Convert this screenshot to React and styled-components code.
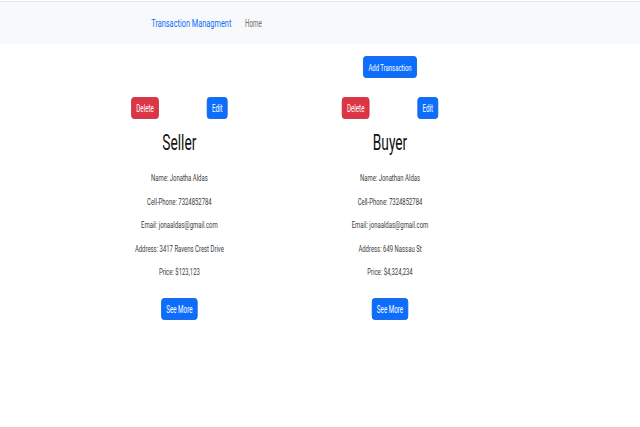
import styled, { createGlobalStyle } from 'styled-components'

// the screenshot is squeezed sideways, so the page is laid out 1024 wide and scaled to 640
const SQUEEZE = 0.625

const GlobalStyle = createGlobalStyle`
  html, body {
    margin: 0;
    padding: 0;
    background: #fff;
    overflow: hidden;
  }
  body {
    font-family: Roboto, "Liberation Sans", Arial, sans-serif;
    color: #212529;
  }
`

const Page = styled.div`
  width: 1024px;
  height: 427px;
  transform: scaleX(${SQUEEZE});
  transform-origin: 0 0;
`

const Navbar = styled.nav`
  margin-top: 1px;
  border-top: 1px solid #e4e4e4;
  height: 42px;
  background: #f8f9fa;
  display: flex;
  align-items: center;
  gap: 22px;
  padding-left: 242px;
`

const Brand = styled.a`
  font-size: 11.8px;
  color: #0d6efd;
  text-decoration: none;
`

const NavLink = styled.a`
  font-size: 10px;
  color: #6c6f73;
  text-decoration: none;
`

const Main = styled.main`
  display: grid;
  grid-template-columns: 154px 154px;
  column-gap: 183px;
  padding-left: 210px;
  padding-top: 12px;
`

const Toolbar = styled.div`
  grid-column: 2;
  display: flex;
  justify-content: center;
  margin-bottom: 19px;
`

const Button = styled.button`
  height: 22px;
  padding: 0 ${p => p.$pad || 8}px;
  display: inline-flex;
  align-items: center;
  justify-content: center;
  font-family: inherit;
  font-size: ${p => p.$size || 9.5}px;
  color: #fff;
  background: ${p => (p.$variant === 'danger' ? '#dc3545' : '#0d6efd')};
  border: 1px solid ${p => (p.$variant === 'danger' ? '#c62a3a' : '#0b5ed7')};
  border-radius: 4px;
  cursor: pointer;
`

const Card = styled.section`
  display: flex;
  flex-direction: column;
  align-items: center;
  grid-row: 2;
`

const Actions = styled.div`
  align-self: stretch;
  display: flex;
  justify-content: space-between;
`

const Title = styled.h1`
  margin: 11px 0 15px;
  font-size: 22px;
  font-weight: 400;
  line-height: 1.2;
  color: #111;
`

const Field = styled.p`
  margin: 0 0 9.5px;
  font-size: 9.5px;
  line-height: 14px;
  white-space: nowrap;
  color: #3a3a3a;
`

const MoreButton = styled(Button)`
  margin-top: 9.5px;
`

const parties = [
  {
    title: 'Seller',
    name: 'Jonatha Aldas',
    phone: '7324852784',
    email: 'jonaaldas@gmail.com',
    address: '3417 Ravens Crest Drive',
    price: '$123,123',
  },
  {
    title: 'Buyer',
    name: 'Jonathan Aldas',
    phone: '7324852784',
    email: 'jonaaldas@gmail.com',
    address: '649 Nassau St',
    price: '$4,324,234',
  },
]

function PartyCard({ party }) {
  return (
    <Card>
      <Actions>
        <Button $variant="danger" $size={10} $pad={7}>Delete</Button>
        <Button $size={10} $pad={7}>Edit</Button>
      </Actions>
      <Title>{party.title}</Title>
      <Field>Name: {party.name}</Field>
      <Field>Cell-Phone: {party.phone}</Field>
      <Field>Email: {party.email}</Field>
      <Field>Address: {party.address}</Field>
      <Field>Price: {party.price}</Field>
      <MoreButton $size={10} $pad={7}>See More</MoreButton>
    </Card>
  )
}

export default function App() {
  return (
    <>
      <GlobalStyle />
      <Page>
        <Navbar>
          <Brand href="#">Transaction Managment</Brand>
          <NavLink href="#">Home</NavLink>
        </Navbar>
        <Main>
          <Toolbar>
            <Button>Add Transaction</Button>
          </Toolbar>
          {parties.map(p => (
            <PartyCard key={p.title} party={p} />
          ))}
        </Main>
      </Page>
    </>
  )
}
